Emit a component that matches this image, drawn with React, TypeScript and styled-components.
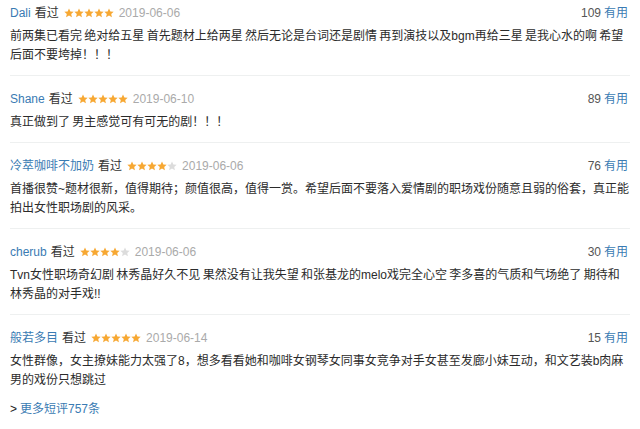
import React from "react";
import styled, { createGlobalStyle } from "styled-components";

const Global = createGlobalStyle`
  html, body { margin: 0; padding: 0; background: #fff; }
  body {
    font-family: "Liberation Sans", "Noto Sans CJK SC", sans-serif;
  }
`;

const Page = styled.div`
  width: 640px;
  height: 429px;
  box-sizing: border-box;
  padding: 3px 10px 0 10px;
  overflow: hidden;
  background: #fff;
`;

const Item = styled.div<{ $last?: boolean }>`
  padding: 13px 0 ${(p) => (p.$last ? "0" : "10px")} 0;
  border-bottom: ${(p) => (p.$last ? "none" : "1px solid #eef0f0")};
  &:first-child { padding-top: 0; }
`;

const Header = styled.div`
  display: flex;
  align-items: center;
  height: 20px;
  font-size: 12px;
  line-height: 20px;
`;

const Name = styled.span`
  color: #3a7bb3;
`;

const Watched = styled.span`
  color: #333;
  margin-left: 4px;
`;

const Stars = styled.span`
  display: inline-flex;
  margin-left: 5px;
`;

const DateText = styled.span`
  color: #aaa;
  margin-left: 5px;
`;

const Votes = styled.span`
  margin-left: auto;
  margin-right: 2px;
  color: #555;
`;

const Useful = styled.span`
  color: #3a7bb3;
  margin-left: 3px;
`;

const Body = styled.div`
  margin-top: 4px;
  font-size: 12px;
  line-height: 19px;
  color: #2b2b2b;
  word-spacing: -1px;
`;

const Line = styled.div`
  white-space: nowrap;
`;

const More = styled.div`
  margin-top: 9px;
  font-size: 12px;
  line-height: 20px;
  color: #3a7bb3;
`;

const Arrow = styled.span`
  color: #222;
  margin-right: 3px;
`;

const Star: React.FC<{ on: boolean }> = ({ on }) => (
  <svg width="10" height="10" viewBox="0 0 24 24">
    <path
      d="M12 1l3.3 7.2 7.9.8-5.9 5.3 1.7 7.8L12 18.2l-7 3.9 1.7-7.8L.8 9l7.9-.8z"
      fill={on ? "#f7a833" : "#dcdcdc"}
    />
  </svg>
);

type Review = {
  name: string;
  rating: number;
  date: string;
  votes: number;
  lines: string[];
};

const reviews: Review[] = [
  {
    name: "Dali",
    rating: 5,
    date: "2019-06-06",
    votes: 109,
    lines: [
      "前两集已看完 绝对给五星 首先题材上给两星 然后无论是台词还是剧情 再到演技以及bgm再给三星 是我心水的啊 希望",
      "后面不要垮掉！！！",
    ],
  },
  {
    name: "Shane",
    rating: 5,
    date: "2019-06-10",
    votes: 89,
    lines: ["真正做到了 男主感觉可有可无的剧！！！"],
  },
  {
    name: "冷萃咖啡不加奶",
    rating: 4,
    date: "2019-06-06",
    votes: 76,
    lines: [
      "首播很赞~题材很新，值得期待；颜值很高，值得一赏。希望后面不要落入爱情剧的职场戏份随意且弱的俗套，真正能",
      "拍出女性职场剧的风采。",
    ],
  },
  {
    name: "cherub",
    rating: 4,
    date: "2019-06-06",
    votes: 30,
    lines: [
      "Tvn女性职场奇幻剧 林秀晶好久不见 果然没有让我失望 和张基龙的melo戏完全心空 李多喜的气质和气场绝了 期待和",
      "林秀晶的对手戏!!",
    ],
  },
  {
    name: "般若多目",
    rating: 5,
    date: "2019-06-14",
    votes: 15,
    lines: [
      "女性群像，女主撩妹能力太强了8，想多看看她和咖啡女钢琴女同事女竞争对手女甚至发廊小妹互动，和文艺装b肉麻",
      "男的戏份只想跳过",
    ],
  },
];

export default function App() {
  return (
    <>
      <Global />
      <Page>
        {reviews.map((r, i) => (
          <Item key={i} $last={i === reviews.length - 1}>
            <Header>
              <Name>{r.name}</Name>
              <Watched>看过</Watched>
              <Stars>
                {[0, 1, 2, 3, 4].map((k) => (
                  <Star key={k} on={k < r.rating} />
                ))}
              </Stars>
              <DateText>{r.date}</DateText>
              <Votes>
                {r.votes}
                <Useful>有用</Useful>
              </Votes>
            </Header>
            <Body>
              {r.lines.map((l, j) => (
                <Line key={j}>{l}</Line>
              ))}
            </Body>
          </Item>
        ))}
        <More>
          <Arrow>&gt;</Arrow>更多短评757条
        </More>
      </Page>
    </>
  );
}
